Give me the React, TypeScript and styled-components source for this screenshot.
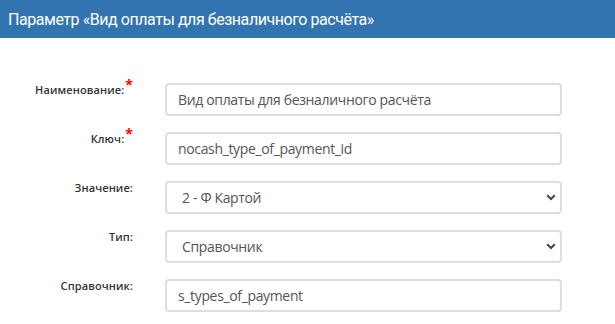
import React from "react";
import styled, { createGlobalStyle } from "styled-components";

const GlobalStyle = createGlobalStyle`
  body {
    margin: 0;
    background: #fff;
    font-family: "Open Sans", "Noto Sans", sans-serif;
  }
`;

const Header = styled.div`
  height: 38px;
  background: #3174b0;
  color: #fff;
  display: flex;
  align-items: center;
  padding: 0 8px;
  font-family: Roboto, "Noto Sans", sans-serif;
  font-size: 16px;
  letter-spacing: -0.45px;
`;

const Form = styled.div`
  padding: 45px 0 0;
  display: flex;
  flex-direction: column;
  gap: 16px;
`;

const Row = styled.div`
  display: grid;
  grid-template-columns: 133px 397px;
  column-gap: 32px;
  align-items: start;
`;

const Label = styled.label`
  text-align: right;
  font-size: 11px;
  letter-spacing: 0.1px;
  font-weight: 600;
  color: #333;
  line-height: 14px;
  padding-top: 0;
`;

const Star = styled.span`
  position: relative;
  top: -4px;
  color: #f00;
  font-size: 14px;
  font-weight: 700;
  line-height: 0;
  margin-left: 1px;
`;

const fieldCss = `
  box-sizing: border-box;
  width: 397px;
  height: 33px;
  border: 2px solid #dedede;
  border-radius: 4px;
  background: #fff;
  color: #555;
  font-family: "Open Sans", "Noto Sans", sans-serif;
  font-size: 14px;
  letter-spacing: -0.35px;
  outline: none;
`;

const Input = styled.input`
  ${fieldCss}
  padding: 0 11px;
`;

const SelectWrap = styled.div`
  position: relative;
  width: 397px;
`;

const Select = styled.select`
  ${fieldCss}
  appearance: none;
  padding: 0 30px 0 15px;
`;

const Chevron = styled.svg`
  position: absolute;
  right: 6px;
  top: 13px;
  pointer-events: none;
`;

const Field = ({ label, required, children }: { label: string; required?: boolean; children: React.ReactNode }) => (
  <Row>
    <Label>
      {label}
      {required && <Star>*</Star>}
    </Label>
    {children}
  </Row>
);

const SelectField = ({ value }: { value: string }) => (
  <SelectWrap>
    <Select defaultValue={value}>
      <option>{value}</option>
    </Select>
    <Chevron width="10" height="7" viewBox="0 0 10 7">
      <path d="M1.2 1.2 L5 5 L8.8 1.2" fill="none" stroke="#444" strokeWidth="2" />
    </Chevron>
  </SelectWrap>
);

export default function App() {
  return (
    <>
      <GlobalStyle />
      <Header>Параметр «Вид оплаты для безналичного расчёта»</Header>
      <Form>
        <Field label="Наименование:" required>
          <Input defaultValue="Вид оплаты для безналичного расчёта" />
        </Field>
        <Field label="Ключ:" required>
          <Input defaultValue="nocash_type_of_payment_id" />
        </Field>
        <Field label="Значение:">
          <SelectField value="2 - Ф Картой" />
        </Field>
        <Field label="Тип:">
          <SelectField value="Справочник" />
        </Field>
        <Field label="Справочник:">
          <Input defaultValue="s_types_of_payment" />
        </Field>
      </Form>
    </>
  );
}
